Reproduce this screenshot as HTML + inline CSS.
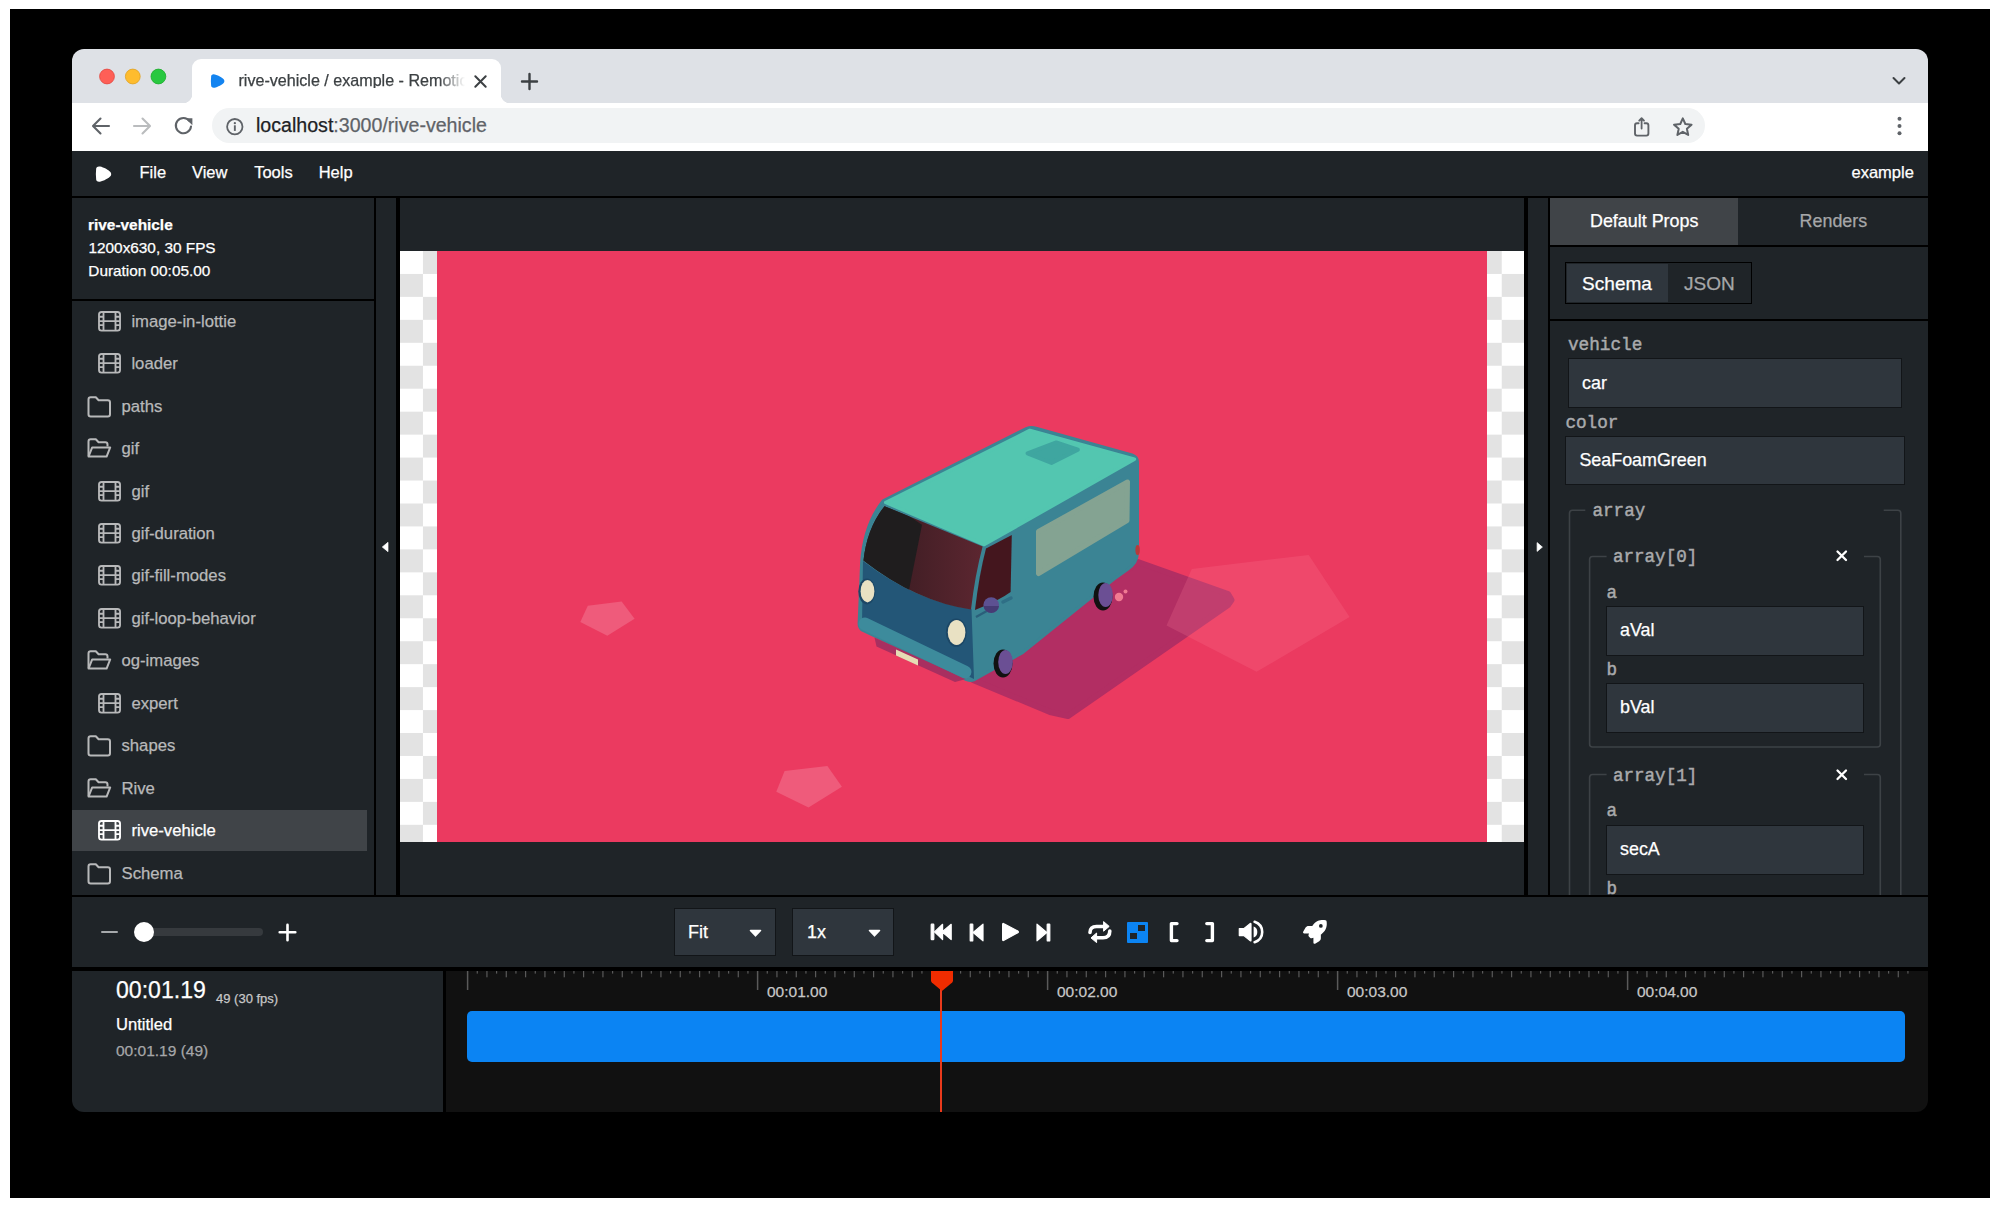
<!DOCTYPE html>
<html><head><meta charset="utf-8">
<style>
*{box-sizing:border-box;margin:0;padding:0}
html,body{width:2000px;height:1207px;overflow:hidden;background:#fff;font-family:"Liberation Sans",sans-serif}
.a{position:absolute}
.t{position:absolute;white-space:nowrap;line-height:1;-webkit-text-stroke:0.25px currentColor}
svg{overflow:visible}
</style></head><body>

<div class="a" style="left:10px;top:9px;width:1980px;height:1189px;background:#000;"></div>
<div class="a" style="left:0;top:0;width:2000px;height:1207px;clip-path:inset(49px 72px 95px 72px round 12px)">
<div class="a" style="left:72px;top:49px;width:1856px;height:54px;background:#dee1e6;"></div>
<svg class="a" style="left:0;top:0" width="2000" height="1207"><circle cx="107" cy="76.5" r="7.4" fill="#fe5f57" stroke="#e2463f" stroke-width="0.8"/><circle cx="132.8" cy="76.5" r="7.4" fill="#febc2e" stroke="#dea123" stroke-width="0.8"/><circle cx="158.4" cy="76.5" r="7.4" fill="#28c840" stroke="#1aab29" stroke-width="0.8"/></svg>
<div class="a" style="left:192px;top:59px;width:309px;height:44px;background:#fff;border-radius:9px 9px 0 0"></div>
<div class="a" style="left:183px;top:94px;width:9px;height:9px;background:radial-gradient(circle at 0 0,transparent 9px,#fff 9.5px);"></div>
<div class="a" style="left:501px;top:94px;width:9px;height:9px;background:radial-gradient(circle at 100% 0,transparent 9px,#fff 9.5px);"></div>
<svg class="a" style="left:211px;top:74px" width="14" height="14"><path transform="scale(0.88,0.87)" d="M0.1 3.6 C-0.1 1 1.8 0.1 4 0.5 C7.6 1.2 13 4.1 14.6 6.2 C15.4 7.3 15.4 8.9 14.6 10 C13 12.1 7.6 15 4 15.7 C1.8 16.1 -0.1 15.2 0.1 12.6 Q-0.4 8.1 0.1 3.6 Z" fill="#1484f0"/></svg>
<div class="t" style="left:238.50px;top:72.31px;font-size:16.1px;color:#3c4043;font-weight:normal;font-family:'Liberation Sans';width:228px;overflow:hidden;-webkit-mask-image:linear-gradient(90deg,#000 200px,transparent 226px)">rive-vehicle / example - Remotion</div>
<svg class="a" style="left:472px;top:73px" width="17" height="17" viewBox="0 0 17 17"><path d="M3.3 3.3 L13.7 13.7 M13.7 3.3 L3.3 13.7" stroke="#3c4043" stroke-width="2" stroke-linecap="round"/></svg>
<svg class="a" style="left:520px;top:72px" width="19" height="19" viewBox="0 0 19 19"><path d="M9.5 2 V17 M2 9.5 H17" stroke="#3c4043" stroke-width="2.4" stroke-linecap="round"/></svg>
<svg class="a" style="left:1890px;top:74px" width="18" height="14" viewBox="0 0 18 14"><path d="M3.5 4 L9 9.5 L14.5 4" stroke="#3c4043" stroke-width="2" fill="none" stroke-linecap="round" stroke-linejoin="round"/></svg>
<div class="a" style="left:72px;top:103px;width:1856px;height:48px;background:#fff;"></div>
<svg class="a" style="left:90px;top:116px" width="22" height="20" viewBox="0 0 22 20"><path d="M19 10 H3.5 M10.5 2.5 L3 10 L10.5 17.5" stroke="#5f6368" stroke-width="2.1" fill="none" stroke-linecap="round" stroke-linejoin="round"/></svg>
<svg class="a" style="left:131px;top:116px" width="22" height="20" viewBox="0 0 22 20"><path d="M3 10 H18.5 M11.5 2.5 L19 10 L11.5 17.5" stroke="#babcbe" stroke-width="2.1" fill="none" stroke-linecap="round" stroke-linejoin="round"/></svg>
<svg class="a" style="left:172px;top:115px" width="23" height="22" viewBox="0 0 23 22"><path d="M17.6 6.2 A7.6 7.6 0 1 0 19 11.5" stroke="#5f6368" stroke-width="2.1" fill="none" stroke-linecap="round"/><path d="M13.3 3.2 L20.4 3.2 L20.4 10.3 Z" fill="#5f6368"/></svg>
<div class="a" style="left:212px;top:108px;width:1493px;height:35px;background:#f1f3f4;border-radius:18px"></div>
<svg class="a" style="left:224px;top:116px" width="22" height="22" viewBox="0 0 22 22"><circle cx="10.8" cy="10.7" r="7.7" stroke="#5f6368" stroke-width="1.8" fill="none"/><rect x="9.9" y="9.3" width="1.9" height="5.6" fill="#5f6368"/><circle cx="10.85" cy="7.2" r="1.15" fill="#5f6368"/></svg>
<div class="t" style="left:256.00px;top:115.84px;font-size:19.6px;color:#202124;font-weight:normal;font-family:'Liberation Sans';">localhost<span style="color:#5f6368">:3000/rive-vehicle</span></div>
<svg class="a" style="left:1630px;top:112px" width="24" height="26" viewBox="0 0 24 26"><path d="M8.6 11.2 H7 Q5 11.2 5 13.2 V21.6 Q5 23.6 7 23.6 H16.4 Q18.4 23.6 18.4 21.6 V13.2 Q18.4 11.2 16.4 11.2 H14.6" stroke="#5f6368" stroke-width="1.9" fill="none" stroke-linecap="round"/><path d="M11.6 16.6 V6.4 M9.2 8.7 L11.6 6.2 L14 8.7" stroke="#5f6368" stroke-width="1.8" fill="none" stroke-linecap="round" stroke-linejoin="round"/></svg>
<svg class="a" style="left:1671px;top:112px" width="24" height="26" viewBox="0 0 24 26"><path d="M11.80 6.30 L14.33 12.02 L20.55 12.66 L15.89 16.83 L17.21 22.94 L11.80 19.80 L6.39 22.94 L7.71 16.83 L3.05 12.66 L9.27 12.02 Z" stroke="#5f6368" stroke-width="2" fill="none" stroke-linejoin="round"/></svg>
<svg class="a" style="left:1893px;top:115px" width="12" height="22" viewBox="0 0 12 22"><circle cx="6.5" cy="3.8" r="2" fill="#5f6368"/><circle cx="6.5" cy="11" r="2" fill="#5f6368"/><circle cx="6.5" cy="18.2" r="2" fill="#5f6368"/></svg>
<div class="a" style="left:72px;top:151px;width:1856px;height:45px;background:#1f2428;"></div>
<div class="a" style="left:72px;top:196px;width:1856px;height:2px;background:#000;"></div>
<svg class="a" style="left:96px;top:165.8px" width="16" height="17"><path d="M0.1 3.6 C-0.1 1 1.8 0.1 4 0.5 C7.6 1.2 13 4.1 14.6 6.2 C15.4 7.3 15.4 8.9 14.6 10 C13 12.1 7.6 15 4 15.7 C1.8 16.1 -0.1 15.2 0.1 12.6 Q-0.4 8.1 0.1 3.6 Z" fill="#fff"/></svg>
<div class="t" style="left:139.50px;top:164.47px;font-size:16.5px;color:#fff;font-weight:normal;font-family:'Liberation Sans';">File</div>
<div class="t" style="left:192.00px;top:164.47px;font-size:16.5px;color:#fff;font-weight:normal;font-family:'Liberation Sans';">View</div>
<div class="t" style="left:254.20px;top:164.47px;font-size:16.5px;color:#fff;font-weight:normal;font-family:'Liberation Sans';">Tools</div>
<div class="t" style="left:318.70px;top:164.47px;font-size:16.5px;color:#fff;font-weight:normal;font-family:'Liberation Sans';">Help</div>
<div class="t" style="left:1851.50px;top:164.47px;font-size:16.5px;color:#fff;font-weight:normal;font-family:'Liberation Sans';">example</div>
<div class="a" style="left:72px;top:198px;width:1856px;height:697px;background:#1f2428;"></div>
<div class="a" style="left:72px;top:299px;width:302px;height:2px;background:#000;"></div>
<div class="a" style="left:374px;top:198px;width:2px;height:697px;background:#000;"></div>
<div class="a" style="left:396px;top:198px;width:4px;height:697px;background:#000;"></div>
<div class="a" style="left:1524px;top:198px;width:4px;height:697px;background:#000;"></div>
<div class="a" style="left:1548px;top:198px;width:2px;height:697px;background:#000;"></div>
<svg class="a" style="left:381px;top:541px" width="9" height="12" viewBox="0 0 9 12"><path d="M7 1.3 L1.3 6 L7 10.7 Z" fill="#fff" stroke="#fff" stroke-width="0.7" stroke-linejoin="round"/></svg>
<svg class="a" style="left:1536px;top:541px" width="9" height="12" viewBox="0 0 9 12"><path d="M1.1 1.6 L6.4 6.1 L1.1 10.4 Z" fill="#fff" stroke="#fff" stroke-width="0.7" stroke-linejoin="round"/></svg>
<div class="t" style="left:88.00px;top:216.71px;font-size:15.4px;color:#fff;font-weight:bold;font-family:'Liberation Sans';">rive-vehicle</div>
<div class="t" style="left:88.50px;top:239.95px;font-size:15.35px;color:#fff;font-weight:normal;font-family:'Liberation Sans';">1200x630, 30 FPS</div>
<div class="t" style="left:88.30px;top:263.25px;font-size:15.35px;color:#fff;font-weight:normal;font-family:'Liberation Sans';">Duration 00:05.00</div>
<svg class="a" style="left:98px;top:311px" width="23" height="21" viewBox="0 0 23 21"><g fill="none" stroke="#b8b9ba" stroke-width="1.85"><rect x="1.0" y="0.95" width="21.05" height="18.7" rx="2.6"/><path d="M5.5 1 V19.6 M17.5 1 V19.6 M1 10.1 H22 M1 5.75 H5.5 M1 14.1 H5.5 M17.5 5.75 H22 M17.5 14.1 H22"/></g></svg>
<div class="t" style="left:131.40px;top:313.61px;font-size:16.7px;color:#b8b9ba;font-weight:normal;font-family:'Liberation Sans';">image-in-lottie</div>
<svg class="a" style="left:98px;top:353px" width="23" height="21" viewBox="0 0 23 21"><g fill="none" stroke="#b8b9ba" stroke-width="1.85"><rect x="1.0" y="0.95" width="21.05" height="18.7" rx="2.6"/><path d="M5.5 1 V19.6 M17.5 1 V19.6 M1 10.1 H22 M1 5.75 H5.5 M1 14.1 H5.5 M17.5 5.75 H22 M17.5 14.1 H22"/></g></svg>
<div class="t" style="left:131.40px;top:356.09px;font-size:16.7px;color:#b8b9ba;font-weight:normal;font-family:'Liberation Sans';">loader</div>
<svg class="a" style="left:87px;top:396px" width="25" height="22" viewBox="0 0 25 22"><path d="M1.5 3.5 Q1.5 1.3 3.7 1.3 H8.8 L11.6 4.3 H20.8 Q23 4.3 23 6.5 V18.3 Q23 20.5 20.8 20.5 H3.7 Q1.5 20.5 1.5 18.3 Z" fill="none" stroke="#b8b9ba" stroke-width="2" stroke-linejoin="round"/></svg>
<div class="t" style="left:121.50px;top:398.56px;font-size:16.7px;color:#b8b9ba;font-weight:normal;font-family:'Liberation Sans';">paths</div>
<svg class="a" style="left:87px;top:438px" width="25" height="22" viewBox="0 0 25 22"><g fill="none" stroke="#b8b9ba" stroke-width="2" stroke-linejoin="round"><path d="M1.5 18 V3.5 Q1.5 1.3 3.7 1.3 H8.8 L11.6 4.3 H18.3 Q20.5 4.3 20.5 6.5 V8.6"/><path d="M1.5 18.6 L5.2 9.4 H23.2 L19.6 18.6 Z"/></g></svg>
<div class="t" style="left:121.50px;top:441.05px;font-size:16.7px;color:#b8b9ba;font-weight:normal;font-family:'Liberation Sans';">gif</div>
<svg class="a" style="left:98px;top:481px" width="23" height="21" viewBox="0 0 23 21"><g fill="none" stroke="#b8b9ba" stroke-width="1.85"><rect x="1.0" y="0.95" width="21.05" height="18.7" rx="2.6"/><path d="M5.5 1 V19.6 M17.5 1 V19.6 M1 10.1 H22 M1 5.75 H5.5 M1 14.1 H5.5 M17.5 5.75 H22 M17.5 14.1 H22"/></g></svg>
<div class="t" style="left:131.40px;top:483.53px;font-size:16.7px;color:#b8b9ba;font-weight:normal;font-family:'Liberation Sans';">gif</div>
<svg class="a" style="left:98px;top:523px" width="23" height="21" viewBox="0 0 23 21"><g fill="none" stroke="#b8b9ba" stroke-width="1.85"><rect x="1.0" y="0.95" width="21.05" height="18.7" rx="2.6"/><path d="M5.5 1 V19.6 M17.5 1 V19.6 M1 10.1 H22 M1 5.75 H5.5 M1 14.1 H5.5 M17.5 5.75 H22 M17.5 14.1 H22"/></g></svg>
<div class="t" style="left:131.40px;top:526.00px;font-size:16.7px;color:#b8b9ba;font-weight:normal;font-family:'Liberation Sans';">gif-duration</div>
<svg class="a" style="left:98px;top:565px" width="23" height="21" viewBox="0 0 23 21"><g fill="none" stroke="#b8b9ba" stroke-width="1.85"><rect x="1.0" y="0.95" width="21.05" height="18.7" rx="2.6"/><path d="M5.5 1 V19.6 M17.5 1 V19.6 M1 10.1 H22 M1 5.75 H5.5 M1 14.1 H5.5 M17.5 5.75 H22 M17.5 14.1 H22"/></g></svg>
<div class="t" style="left:131.40px;top:568.49px;font-size:16.7px;color:#b8b9ba;font-weight:normal;font-family:'Liberation Sans';">gif-fill-modes</div>
<svg class="a" style="left:98px;top:608px" width="23" height="21" viewBox="0 0 23 21"><g fill="none" stroke="#b8b9ba" stroke-width="1.85"><rect x="1.0" y="0.95" width="21.05" height="18.7" rx="2.6"/><path d="M5.5 1 V19.6 M17.5 1 V19.6 M1 10.1 H22 M1 5.75 H5.5 M1 14.1 H5.5 M17.5 5.75 H22 M17.5 14.1 H22"/></g></svg>
<div class="t" style="left:131.40px;top:610.96px;font-size:16.7px;color:#b8b9ba;font-weight:normal;font-family:'Liberation Sans';">gif-loop-behavior</div>
<svg class="a" style="left:87px;top:650px" width="25" height="22" viewBox="0 0 25 22"><g fill="none" stroke="#b8b9ba" stroke-width="2" stroke-linejoin="round"><path d="M1.5 18 V3.5 Q1.5 1.3 3.7 1.3 H8.8 L11.6 4.3 H18.3 Q20.5 4.3 20.5 6.5 V8.6"/><path d="M1.5 18.6 L5.2 9.4 H23.2 L19.6 18.6 Z"/></g></svg>
<div class="t" style="left:121.50px;top:653.44px;font-size:16.7px;color:#b8b9ba;font-weight:normal;font-family:'Liberation Sans';">og-images</div>
<svg class="a" style="left:98px;top:693px" width="23" height="21" viewBox="0 0 23 21"><g fill="none" stroke="#b8b9ba" stroke-width="1.85"><rect x="1.0" y="0.95" width="21.05" height="18.7" rx="2.6"/><path d="M5.5 1 V19.6 M17.5 1 V19.6 M1 10.1 H22 M1 5.75 H5.5 M1 14.1 H5.5 M17.5 5.75 H22 M17.5 14.1 H22"/></g></svg>
<div class="t" style="left:131.40px;top:695.92px;font-size:16.7px;color:#b8b9ba;font-weight:normal;font-family:'Liberation Sans';">expert</div>
<svg class="a" style="left:87px;top:735px" width="25" height="22" viewBox="0 0 25 22"><path d="M1.5 3.5 Q1.5 1.3 3.7 1.3 H8.8 L11.6 4.3 H20.8 Q23 4.3 23 6.5 V18.3 Q23 20.5 20.8 20.5 H3.7 Q1.5 20.5 1.5 18.3 Z" fill="none" stroke="#b8b9ba" stroke-width="2" stroke-linejoin="round"/></svg>
<div class="t" style="left:121.50px;top:738.40px;font-size:16.7px;color:#b8b9ba;font-weight:normal;font-family:'Liberation Sans';">shapes</div>
<svg class="a" style="left:87px;top:778px" width="25" height="22" viewBox="0 0 25 22"><g fill="none" stroke="#b8b9ba" stroke-width="2" stroke-linejoin="round"><path d="M1.5 18 V3.5 Q1.5 1.3 3.7 1.3 H8.8 L11.6 4.3 H18.3 Q20.5 4.3 20.5 6.5 V8.6"/><path d="M1.5 18.6 L5.2 9.4 H23.2 L19.6 18.6 Z"/></g></svg>
<div class="t" style="left:121.50px;top:780.88px;font-size:16.7px;color:#b8b9ba;font-weight:normal;font-family:'Liberation Sans';">Rive</div>
<div class="a" style="left:72px;top:810px;width:295px;height:41px;background:rgba(255,255,255,0.15);"></div>
<svg class="a" style="left:98px;top:820px" width="23" height="21" viewBox="0 0 23 21"><g fill="none" stroke="#fff" stroke-width="1.85"><rect x="1.0" y="0.95" width="21.05" height="18.7" rx="2.6"/><path d="M5.5 1 V19.6 M17.5 1 V19.6 M1 10.1 H22 M1 5.75 H5.5 M1 14.1 H5.5 M17.5 5.75 H22 M17.5 14.1 H22"/></g></svg>
<div class="t" style="left:131.40px;top:823.36px;font-size:16.7px;color:#fff;font-weight:normal;font-family:'Liberation Sans';">rive-vehicle</div>
<svg class="a" style="left:87px;top:863px" width="25" height="22" viewBox="0 0 25 22"><path d="M1.5 3.5 Q1.5 1.3 3.7 1.3 H8.8 L11.6 4.3 H20.8 Q23 4.3 23 6.5 V18.3 Q23 20.5 20.8 20.5 H3.7 Q1.5 20.5 1.5 18.3 Z" fill="none" stroke="#b8b9ba" stroke-width="2" stroke-linejoin="round"/></svg>
<div class="t" style="left:121.50px;top:865.84px;font-size:16.7px;color:#b8b9ba;font-weight:normal;font-family:'Liberation Sans';">Schema</div>
<div class="a" style="left:400px;top:251px;width:1124px;height:591px;background:repeating-conic-gradient(#fff 0 25%,#e3e3e3 0 50%) 22.96px 0/45.92px 45.92px;"></div>
<div class="a" style="left:437px;top:251px;width:1050px;height:591px;background:#eb3a60;"></div>
<svg class="a" style="left:0;top:0;clip-path:inset(251px 513px 365px 437px)" width="2000" height="1207"><polygon points="587.8,605.8 621.6,601.5 634.6,618.8 607.3,635.7 580.3,622.1" fill="#ef5b7b" /><polygon points="784.6,770.9 827.4,765.9 841.9,786.8 808.5,807.6 776.3,791.7" fill="#ef5b7b" /><polygon points="1138,562 1228,594 1231.5,600 1228,605 1068,716 1050,712 973,680 1022,652 1116,578" fill="#b22e63" stroke="#b22e63" stroke-width="6" stroke-linejoin="round"/><polygon points="1191.8,569 1308.7,554.9 1349.6,616.9 1256.6,671.8 1166.5,625.4" fill="rgba(255,130,155,0.2)" /><path d="M883.1 500.9 L1026.3 428.6 Q1031 426.8 1036 428.3 L1132 455 Q1137.5 457 1137.5 462 L1137.5 553 Q1137 563 1128 569 L1114 579 L1022.6 652.7 L974.6 679.5 Q970 681.5 966 679.5 L862 630 Q858.5 627 859.2 621.5 L861.6 563 Q864 525 883.1 500.9 Z" fill="#3b8494" stroke="#3b8494" stroke-width="3" stroke-linejoin="round"/><path d="M863 561 Q916.3 601.7 971.5 609 L974 679 L862 624 Z" fill="#235677"/><polygon points="885.7,502.5 1029.9,430.4 1134.4,459.3 984.2,544.6" fill="#53c6b0" stroke="#53c6b0" stroke-width="3.5" stroke-linejoin="round"/><polygon points="1027.5,453.3 1056.3,442.4 1077.9,449.7 1051.5,462.9" fill="#3fa6a0" stroke="#3fa6a0" stroke-width="4" stroke-linejoin="round"/><defs><linearGradient id="ws" x1="0" y1="0" x2="1" y2="0"><stop offset="0" stop-color="#331a1f"/><stop offset="1" stop-color="#5c2630"/></linearGradient></defs><defs><clipPath id="wsc"><path d="M884.5 506.2 L982.6 546.5 Q975 575 971 609.5 Q916.3 601.7 863.5 560.5 Q867 528 884.5 506.2 Z"/></clipPath></defs><path d="M884.5 506.2 L982.6 546.5 Q975 575 971 609.5 Q916.3 601.7 863.5 560.5 Q867 528 884.5 506.2 Z" fill="url(#ws)"/><path clip-path="url(#wsc)" d="M870 490 L922 524.7 L905 610 L850 590 Z" fill="#1f1d1e"/><path d="M986 548.5 L1011.8 535 L1010.6 592 Q1000 600 975 610 Q979 575 986 548.5 Z" fill="#44161e"/><polygon points="1038.5,531.5 1127.5,482 1127,520.5 1038.5,573.5" fill="#84a392" stroke="#84a392" stroke-width="5" stroke-linejoin="round"/><ellipse cx="1137.6" cy="550" rx="2.2" ry="5" fill="#b83a3a"/><path d="M874.5 637.5 L966 679 L955 682 L876.5 646.5 Z" fill="#a82f60"/><path d="M865 624 L965 672" stroke="#3d8b9c" stroke-width="13" stroke-linecap="round"/><polygon points="896,649.5 918,659.5 918,665.5 896,655.5" fill="#e6dcb4" /><ellipse cx="866.9" cy="591.4" rx="8.6" ry="13" fill="#1c4766"/><ellipse cx="867.5" cy="591.2" rx="6.9" ry="11.2" fill="#e9e1c3"/><ellipse cx="956.3" cy="632.6" rx="10.4" ry="14.2" fill="#1c4766"/><ellipse cx="956.6" cy="632.4" rx="8.8" ry="12.5" fill="#e9e1c3"/><ellipse cx="1003" cy="663.5" rx="9.5" ry="14" fill="#111"/><ellipse cx="1005.5" cy="662" rx="7.3" ry="12" fill="#6b4f94"/><ellipse cx="1103" cy="596.5" rx="9.5" ry="14" fill="#111"/><ellipse cx="1105.6" cy="595" rx="7.3" ry="12" fill="#6b4f94"/><path d="M976 617 L994 607" stroke="#2a5f7a" stroke-width="2.2"/><circle cx="991.2" cy="605" r="7.8" fill="#5d5192"/><path d="M983.5 606 A7.8 7.8 0 0 0 999 606 Z" fill="#463b74"/><path d="M1003 602 L1011 598" stroke="#2f6f86" stroke-width="3.5" stroke-linecap="round"/><circle cx="1119" cy="597" r="4.2" fill="#f07a92"/><circle cx="1125.5" cy="591.5" r="2" fill="#f07a92"/></svg>
<div class="a" style="left:1550px;top:198px;width:188px;height:47px;background:rgba(255,255,255,0.15);"></div>
<div class="a" style="left:1550px;top:245px;width:378px;height:2px;background:#000;"></div>
<div class="t" style="left:1590.00px;top:213.09px;font-size:17.9px;color:#fff;font-weight:normal;font-family:'Liberation Sans';">Default Props</div>
<div class="t" style="left:1799.60px;top:213.09px;font-size:17.9px;color:#a6a7a9;font-weight:normal;font-family:'Liberation Sans';">Renders</div>
<div class="a" style="left:1565px;top:262px;width:187px;height:41.5px;background:#1f2428;border:1.5px solid #000"></div>
<div class="a" style="left:1566.5px;top:263.5px;width:101.7px;height:38.5px;background:#2f363d;"></div>
<div class="t" style="left:1582.10px;top:273.71px;font-size:19.05px;color:#fff;font-weight:normal;font-family:'Liberation Sans';">Schema</div>
<div class="t" style="left:1684.00px;top:273.71px;font-size:19.05px;color:#a6a7a9;font-weight:normal;font-family:'Liberation Sans';">JSON</div>
<div class="a" style="left:1550px;top:319px;width:378px;height:2px;background:#000;"></div>
<div class="t" style="left:1568.00px;top:337.05px;font-size:17.7px;color:#a9aaac;font-weight:normal;font-family:'Liberation Mono';-webkit-text-stroke:0.45px #a9aaac">vehicle</div>
<div class="a" style="left:1567.7px;top:358.3px;width:334.4px;height:49.4px;background:#2f363d;border:1.7px solid rgba(0,0,0,0.6)"></div>
<div class="t" style="left:1582.00px;top:375.49px;font-size:17.9px;color:#fff;font-weight:normal;font-family:'Liberation Sans';">car</div>
<div class="t" style="left:1565.40px;top:414.55px;font-size:17.7px;color:#a9aaac;font-weight:normal;font-family:'Liberation Mono';-webkit-text-stroke:0.45px #a9aaac">color</div>
<div class="a" style="left:1565.3px;top:435.5px;width:339.4px;height:49.6px;background:#2f363d;border:1.7px solid rgba(0,0,0,0.6)"></div>
<div class="t" style="left:1579.40px;top:451.99px;font-size:17.9px;color:#fff;font-weight:normal;font-family:'Liberation Sans';">SeaFoamGreen</div>
<svg class="a" style="left:0;top:0" width="2000" height="1207"><path d="M1585.3 510.3 H1572.5 Q1569.5 510.3 1569.5 513.3 V997 Q1569.5 1000 1572.5 1000 H1897.8 Q1900.8 1000 1900.8 997 V513.3 Q1900.8 510.3 1897.8 510.3 H1883.7" fill="none" stroke="#3d4246" stroke-width="1.6"/></svg>
<div class="t" style="left:1592.50px;top:502.62px;font-size:17.6px;color:#a9aaac;font-weight:normal;font-family:'Liberation Mono';-webkit-text-stroke:0.45px #a9aaac">array</div>
<svg class="a" style="left:0;top:0" width="2000" height="1207"><path d="M1606.6 556.5 H1592.6 Q1589.6 556.5 1589.6 559.5 V744 Q1589.6 747 1592.6 747 H1877.3 Q1880.3 747 1880.3 744 V559.5 Q1880.3 556.5 1877.3 556.5 H1864" fill="none" stroke="#3d4246" stroke-width="1.6"/></svg>
<div class="t" style="left:1612.90px;top:548.62px;font-size:17.6px;color:#a9aaac;font-weight:normal;font-family:'Liberation Mono';-webkit-text-stroke:0.45px #a9aaac">array[0]</div>
<svg class="a" style="left:1836px;top:550px" width="12" height="12" viewBox="0 0 12 12"><path d="M1.5 1.5 L10 10 M10 1.5 L1.5 10" stroke="#fff" stroke-width="2.3" stroke-linecap="round"/></svg>
<div class="t" style="left:1606.60px;top:584.62px;font-size:17.6px;color:#a9aaac;font-weight:normal;font-family:'Liberation Mono';-webkit-text-stroke:0.45px #a9aaac">a</div>
<div class="a" style="left:1606.3px;top:605.6999999999999px;width:257.4px;height:50.0px;background:#2f363d;border:1.7px solid rgba(0,0,0,0.6)"></div>
<div class="t" style="left:1620.00px;top:622.18px;font-size:17.9px;color:#fff;font-weight:normal;font-family:'Liberation Sans';">aVal</div>
<div class="t" style="left:1606.60px;top:662.22px;font-size:17.6px;color:#a9aaac;font-weight:normal;font-family:'Liberation Mono';-webkit-text-stroke:0.45px #a9aaac">b</div>
<div class="a" style="left:1606.3px;top:682.6999999999999px;width:257.4px;height:49.9px;background:#2f363d;border:1.7px solid rgba(0,0,0,0.6)"></div>
<div class="t" style="left:1620.00px;top:699.18px;font-size:17.9px;color:#fff;font-weight:normal;font-family:'Liberation Sans';">bVal</div>
<svg class="a" style="left:0;top:0" width="2000" height="1207"><path d="M1606.6 774.5 H1592.6 Q1589.6 774.5 1589.6 777.5 V997 Q1589.6 1000 1592.6 1000 H1877.3 Q1880.3 1000 1880.3 997 V777.5 Q1880.3 774.5 1877.3 774.5 H1864" fill="none" stroke="#3d4246" stroke-width="1.6"/></svg>
<div class="t" style="left:1612.90px;top:767.62px;font-size:17.6px;color:#a9aaac;font-weight:normal;font-family:'Liberation Mono';-webkit-text-stroke:0.45px #a9aaac">array[1]</div>
<svg class="a" style="left:1836px;top:768.5px" width="12" height="12" viewBox="0 0 12 12"><path d="M1.5 1.5 L10 10 M10 1.5 L1.5 10" stroke="#fff" stroke-width="2.3" stroke-linecap="round"/></svg>
<div class="t" style="left:1606.60px;top:803.42px;font-size:17.6px;color:#a9aaac;font-weight:normal;font-family:'Liberation Mono';-webkit-text-stroke:0.45px #a9aaac">a</div>
<div class="a" style="left:1606.3px;top:824.9px;width:257.4px;height:49.8px;background:#2f363d;border:1.7px solid rgba(0,0,0,0.6)"></div>
<div class="t" style="left:1620.00px;top:840.88px;font-size:17.9px;color:#fff;font-weight:normal;font-family:'Liberation Sans';">secA</div>
<div class="t" style="left:1606.60px;top:880.82px;font-size:17.6px;color:#a9aaac;font-weight:normal;font-family:'Liberation Mono';-webkit-text-stroke:0.45px #a9aaac">b</div>
<div class="a" style="left:72px;top:895px;width:1856px;height:2px;background:#000;"></div>
<div class="a" style="left:72px;top:897px;width:1856px;height:70px;background:#1f2428;"></div>
<div class="a" style="left:72px;top:967px;width:1856px;height:4px;background:#000;"></div>
<div class="a" style="left:101px;top:930.7px;width:17px;height:2.6px;background:#a6a9ac;border-radius:1.3px"></div>
<div class="a" style="left:144px;top:928.2px;width:118.5px;height:7.6px;background:#363a3e;border-radius:4px"></div>
<div class="a" style="left:134px;top:922px;width:20px;height:20px;background:#fff;border-radius:50%"></div>
<svg class="a" style="left:278px;top:923px" width="19" height="19" viewBox="0 0 19 19"><path d="M9.5 1.9 V17.3 M1.7 9.2 H17.3" stroke="#fff" stroke-width="2.6" stroke-linecap="round"/></svg>
<div class="a" style="left:674px;top:907.6px;width:101.6px;height:48.4px;background:#2f363d;border:1.6px solid rgba(0,0,0,0.6)"></div>
<div class="t" style="left:688.00px;top:922.70px;font-size:18px;color:#fff;font-weight:normal;font-family:'Liberation Sans';">Fit</div>
<svg class="a" style="left:749.4px;top:929px" width="13" height="8" viewBox="0 0 13 8"><path d="M1.5 1.5 H11.5 L6.5 6.8 Z" fill="#fff" stroke="#fff" stroke-width="1.6" stroke-linejoin="round"/></svg>
<div class="a" style="left:792.4px;top:907.6px;width:102px;height:48.4px;background:#2f363d;border:1.6px solid rgba(0,0,0,0.6)"></div>
<div class="t" style="left:807.00px;top:922.70px;font-size:18px;color:#fff;font-weight:normal;font-family:'Liberation Sans';">1x</div>
<svg class="a" style="left:868px;top:929px" width="13" height="8" viewBox="0 0 13 8"><path d="M1.5 1.5 H11.5 L6.5 6.8 Z" fill="#fff" stroke="#fff" stroke-width="1.6" stroke-linejoin="round"/></svg>
<svg class="a" style="left:930px;top:923px" width="23" height="18" viewBox="0 0 23 18"><g fill="#fff" stroke="#fff" stroke-linejoin="round" stroke-width="1.2"><rect x="1.2" y="1.2" width="2.6" height="15.5" rx="0.6"/><path d="M4.5 8.9 L12.6 1.3 V16.6 Z M12 8.9 L21.2 1.3 V16.6 Z"/></g></svg>
<svg class="a" style="left:968.5px;top:922.5px" width="16" height="19" viewBox="0 0 16 19"><g fill="#fff" stroke="#fff" stroke-linejoin="round" stroke-width="1.2"><rect x="1.2" y="1" width="2.6" height="17" rx="0.6"/><path d="M4.2 9.5 L14 1.2 V17.8 Z"/></g></svg>
<svg class="a" style="left:1000.5px;top:922px" width="19" height="20" viewBox="0 0 19 20"><path d="M1.6 2.4 Q1.6 0.9 3 1.7 L16.8 9 Q18 9.9 16.8 10.8 L3 18.3 Q1.6 19.1 1.6 17.6 Z" fill="#fff" stroke="#fff" stroke-width="1.2" stroke-linejoin="round"/></svg>
<svg class="a" style="left:1035.5px;top:922.5px" width="16" height="19" viewBox="0 0 16 19"><g fill="#fff" stroke="#fff" stroke-linejoin="round" stroke-width="1.2"><rect x="11.2" y="1" width="2.6" height="17" rx="0.6"/><path d="M10.8 9.5 L1 1.2 V17.8 Z"/></g></svg>
<svg class="a" style="left:1088px;top:921px" width="24" height="22" viewBox="0 0 24 22"><g stroke="#fff" stroke-width="3.6" fill="none" stroke-linecap="round"><path d="M2 11.5 Q2 5.5 8.5 5.5 H16.5"/><path d="M21.8 10 Q21.8 16.8 15 16.8 H8"/></g><path d="M15.6 0.6 L21.2 5.4 L15.6 10.2 Z M8.6 12 L3 16.9 L8.6 21.6 Z" fill="#fff" stroke="#fff" stroke-width="1" stroke-linejoin="round"/></svg>
<div class="a" style="left:1127px;top:922px;width:21px;height:20.6px;background:#0b84f3;border-radius:1px"></div>
<div class="a" style="left:1137.7px;top:924.6px;width:7px;height:6.8px;background:#1f2428;"></div>
<div class="a" style="left:1129.8px;top:932.5px;width:7px;height:6.8px;background:#1f2428;"></div>
<svg class="a" style="left:1167.5px;top:921px" width="12" height="23" viewBox="0 0 12 23"><path d="M9 2.6 H3.4 V19.6 H9" stroke="#fff" stroke-width="3.4" fill="none" stroke-linecap="round" stroke-linejoin="round"/></svg>
<svg class="a" style="left:1203.5px;top:921px" width="12" height="23" viewBox="0 0 12 23"><path d="M2.8 2.6 H8.4 V19.6 H2.8" stroke="#fff" stroke-width="3.4" fill="none" stroke-linecap="round" stroke-linejoin="round"/></svg>
<svg class="a" style="left:1238px;top:920px" width="28" height="25" viewBox="0 0 28 25"><path d="M1.3 8.6 H5.8 L12.3 3.5 Q13 3 13 4 V20.3 Q13 21.3 12.3 20.8 L5.8 15.6 H1.3 Z" fill="#fff" stroke="#fff" stroke-width="1.2" stroke-linejoin="round"/><path d="M15.6 6.5 Q19.3 7.6 19.3 12 Q19.3 16.4 15.6 17.5 Z" fill="#fff"/><path d="M16.6 1.8 Q24.2 4.4 24.2 12 Q24.2 19.6 16.6 22.2" stroke="#fff" stroke-width="2.6" fill="none" stroke-linecap="round"/></svg>
<svg class="a" style="left:1303.4px;top:919.9px" width="24" height="24"><path transform="scale(0.0465)" d="M156.6 384.9L125.7 354c-8.5-8.5-11.5-20.8-7.7-32.2c3-8.9 7-20.5 11.8-33.8L24 288c-8.6 0-16.6-4.6-20.9-12.1s-4.2-16.7 .2-24.1l52.5-88.5c13-21.9 36.5-35.3 61.9-35.3l82.3 0c2.4-4 4.8-7.7 7.2-11.3C289.1-4.1 411.1-8.1 483.9 5.3c11.6 2.1 20.6 11.2 22.8 22.8c13.4 72.9 9.3 194.8-111.4 276.7c-3.5 2.4-7.3 4.8-11.3 7.2v82.3c0 25.4-13.4 49-35.3 61.9l-88.5 52.5c-7.4 4.4-16.6 4.5-24.1 .2s-12.1-12.2-12.1-20.9V380.8c-14.1 4.9-26.4 8.9-35.7 11.9c-11.2 3.6-23.4 .5-31.8-7.8zM384 168a40 40 0 1 0 0-80 40 40 0 1 0 0 80z" fill="#fff"/></svg>
<div class="a" style="left:72px;top:971px;width:371px;height:141px;background:#1f2428;"></div>
<div class="a" style="left:443px;top:971px;width:3px;height:141px;background:#000;"></div>
<div class="a" style="left:446px;top:971px;width:1482px;height:141px;background:#111;"></div>
<div class="t" style="left:116.00px;top:979.37px;font-size:23.1px;color:#fff;font-weight:normal;font-family:'Liberation Sans';">00:01.19</div>
<div class="t" style="left:216.00px;top:991.95px;font-size:13px;color:#c8c8c8;font-weight:normal;font-family:'Liberation Sans';">49 (30 fps)</div>
<div class="t" style="left:116.00px;top:1017.09px;font-size:16.6px;color:#fff;font-weight:normal;font-family:'Liberation Sans';">Untitled</div>
<div class="t" style="left:116.00px;top:1042.83px;font-size:15.5px;color:#a6a7a9;font-weight:normal;font-family:'Liberation Sans';">00:01.19 (49)</div>
<svg class="a" style="left:0;top:0" width="2000" height="1207"><rect x="466.85" y="971" width="1.5" height="19" fill="#5a5a5a"/><rect x="476.67" y="971" width="1.2" height="2.6" fill="#5a5a5a"/><rect x="486.33" y="971" width="1.2" height="6.3" fill="#5a5a5a"/><rect x="496.00" y="971" width="1.2" height="2.6" fill="#5a5a5a"/><rect x="505.67" y="971" width="1.2" height="6.3" fill="#5a5a5a"/><rect x="515.33" y="971" width="1.2" height="2.6" fill="#5a5a5a"/><rect x="525.00" y="971" width="1.2" height="6.3" fill="#5a5a5a"/><rect x="534.67" y="971" width="1.2" height="2.6" fill="#5a5a5a"/><rect x="544.33" y="971" width="1.2" height="6.3" fill="#5a5a5a"/><rect x="554.00" y="971" width="1.2" height="2.6" fill="#5a5a5a"/><rect x="563.67" y="971" width="1.2" height="6.3" fill="#5a5a5a"/><rect x="573.33" y="971" width="1.2" height="2.6" fill="#5a5a5a"/><rect x="583.00" y="971" width="1.2" height="6.3" fill="#5a5a5a"/><rect x="592.67" y="971" width="1.2" height="2.6" fill="#5a5a5a"/><rect x="602.33" y="971" width="1.2" height="6.3" fill="#5a5a5a"/><rect x="612.00" y="971" width="1.2" height="2.6" fill="#5a5a5a"/><rect x="621.67" y="971" width="1.2" height="6.3" fill="#5a5a5a"/><rect x="631.33" y="971" width="1.2" height="2.6" fill="#5a5a5a"/><rect x="641.00" y="971" width="1.2" height="6.3" fill="#5a5a5a"/><rect x="650.67" y="971" width="1.2" height="2.6" fill="#5a5a5a"/><rect x="660.33" y="971" width="1.2" height="6.3" fill="#5a5a5a"/><rect x="670.00" y="971" width="1.2" height="2.6" fill="#5a5a5a"/><rect x="679.67" y="971" width="1.2" height="6.3" fill="#5a5a5a"/><rect x="689.33" y="971" width="1.2" height="2.6" fill="#5a5a5a"/><rect x="699.00" y="971" width="1.2" height="6.3" fill="#5a5a5a"/><rect x="708.67" y="971" width="1.2" height="2.6" fill="#5a5a5a"/><rect x="718.33" y="971" width="1.2" height="6.3" fill="#5a5a5a"/><rect x="728.00" y="971" width="1.2" height="2.6" fill="#5a5a5a"/><rect x="737.67" y="971" width="1.2" height="6.3" fill="#5a5a5a"/><rect x="747.33" y="971" width="1.2" height="2.6" fill="#5a5a5a"/><rect x="756.85" y="971" width="1.5" height="19" fill="#5a5a5a"/><rect x="766.67" y="971" width="1.2" height="2.6" fill="#5a5a5a"/><rect x="776.33" y="971" width="1.2" height="6.3" fill="#5a5a5a"/><rect x="786.00" y="971" width="1.2" height="2.6" fill="#5a5a5a"/><rect x="795.67" y="971" width="1.2" height="6.3" fill="#5a5a5a"/><rect x="805.33" y="971" width="1.2" height="2.6" fill="#5a5a5a"/><rect x="815.00" y="971" width="1.2" height="6.3" fill="#5a5a5a"/><rect x="824.67" y="971" width="1.2" height="2.6" fill="#5a5a5a"/><rect x="834.33" y="971" width="1.2" height="6.3" fill="#5a5a5a"/><rect x="844.00" y="971" width="1.2" height="2.6" fill="#5a5a5a"/><rect x="853.67" y="971" width="1.2" height="6.3" fill="#5a5a5a"/><rect x="863.33" y="971" width="1.2" height="2.6" fill="#5a5a5a"/><rect x="873.00" y="971" width="1.2" height="6.3" fill="#5a5a5a"/><rect x="882.67" y="971" width="1.2" height="2.6" fill="#5a5a5a"/><rect x="892.33" y="971" width="1.2" height="6.3" fill="#5a5a5a"/><rect x="902.00" y="971" width="1.2" height="2.6" fill="#5a5a5a"/><rect x="911.67" y="971" width="1.2" height="6.3" fill="#5a5a5a"/><rect x="921.33" y="971" width="1.2" height="2.6" fill="#5a5a5a"/><rect x="931.00" y="971" width="1.2" height="6.3" fill="#5a5a5a"/><rect x="940.67" y="971" width="1.2" height="2.6" fill="#5a5a5a"/><rect x="950.33" y="971" width="1.2" height="6.3" fill="#5a5a5a"/><rect x="960.00" y="971" width="1.2" height="2.6" fill="#5a5a5a"/><rect x="969.67" y="971" width="1.2" height="6.3" fill="#5a5a5a"/><rect x="979.33" y="971" width="1.2" height="2.6" fill="#5a5a5a"/><rect x="989.00" y="971" width="1.2" height="6.3" fill="#5a5a5a"/><rect x="998.67" y="971" width="1.2" height="2.6" fill="#5a5a5a"/><rect x="1008.33" y="971" width="1.2" height="6.3" fill="#5a5a5a"/><rect x="1018.00" y="971" width="1.2" height="2.6" fill="#5a5a5a"/><rect x="1027.67" y="971" width="1.2" height="6.3" fill="#5a5a5a"/><rect x="1037.33" y="971" width="1.2" height="2.6" fill="#5a5a5a"/><rect x="1046.85" y="971" width="1.5" height="19" fill="#5a5a5a"/><rect x="1056.67" y="971" width="1.2" height="2.6" fill="#5a5a5a"/><rect x="1066.33" y="971" width="1.2" height="6.3" fill="#5a5a5a"/><rect x="1076.00" y="971" width="1.2" height="2.6" fill="#5a5a5a"/><rect x="1085.67" y="971" width="1.2" height="6.3" fill="#5a5a5a"/><rect x="1095.33" y="971" width="1.2" height="2.6" fill="#5a5a5a"/><rect x="1105.00" y="971" width="1.2" height="6.3" fill="#5a5a5a"/><rect x="1114.67" y="971" width="1.2" height="2.6" fill="#5a5a5a"/><rect x="1124.33" y="971" width="1.2" height="6.3" fill="#5a5a5a"/><rect x="1134.00" y="971" width="1.2" height="2.6" fill="#5a5a5a"/><rect x="1143.67" y="971" width="1.2" height="6.3" fill="#5a5a5a"/><rect x="1153.33" y="971" width="1.2" height="2.6" fill="#5a5a5a"/><rect x="1163.00" y="971" width="1.2" height="6.3" fill="#5a5a5a"/><rect x="1172.67" y="971" width="1.2" height="2.6" fill="#5a5a5a"/><rect x="1182.33" y="971" width="1.2" height="6.3" fill="#5a5a5a"/><rect x="1192.00" y="971" width="1.2" height="2.6" fill="#5a5a5a"/><rect x="1201.67" y="971" width="1.2" height="6.3" fill="#5a5a5a"/><rect x="1211.33" y="971" width="1.2" height="2.6" fill="#5a5a5a"/><rect x="1221.00" y="971" width="1.2" height="6.3" fill="#5a5a5a"/><rect x="1230.67" y="971" width="1.2" height="2.6" fill="#5a5a5a"/><rect x="1240.33" y="971" width="1.2" height="6.3" fill="#5a5a5a"/><rect x="1250.00" y="971" width="1.2" height="2.6" fill="#5a5a5a"/><rect x="1259.67" y="971" width="1.2" height="6.3" fill="#5a5a5a"/><rect x="1269.33" y="971" width="1.2" height="2.6" fill="#5a5a5a"/><rect x="1279.00" y="971" width="1.2" height="6.3" fill="#5a5a5a"/><rect x="1288.67" y="971" width="1.2" height="2.6" fill="#5a5a5a"/><rect x="1298.33" y="971" width="1.2" height="6.3" fill="#5a5a5a"/><rect x="1308.00" y="971" width="1.2" height="2.6" fill="#5a5a5a"/><rect x="1317.67" y="971" width="1.2" height="6.3" fill="#5a5a5a"/><rect x="1327.33" y="971" width="1.2" height="2.6" fill="#5a5a5a"/><rect x="1336.85" y="971" width="1.5" height="19" fill="#5a5a5a"/><rect x="1346.67" y="971" width="1.2" height="2.6" fill="#5a5a5a"/><rect x="1356.33" y="971" width="1.2" height="6.3" fill="#5a5a5a"/><rect x="1366.00" y="971" width="1.2" height="2.6" fill="#5a5a5a"/><rect x="1375.67" y="971" width="1.2" height="6.3" fill="#5a5a5a"/><rect x="1385.33" y="971" width="1.2" height="2.6" fill="#5a5a5a"/><rect x="1395.00" y="971" width="1.2" height="6.3" fill="#5a5a5a"/><rect x="1404.67" y="971" width="1.2" height="2.6" fill="#5a5a5a"/><rect x="1414.33" y="971" width="1.2" height="6.3" fill="#5a5a5a"/><rect x="1424.00" y="971" width="1.2" height="2.6" fill="#5a5a5a"/><rect x="1433.67" y="971" width="1.2" height="6.3" fill="#5a5a5a"/><rect x="1443.33" y="971" width="1.2" height="2.6" fill="#5a5a5a"/><rect x="1453.00" y="971" width="1.2" height="6.3" fill="#5a5a5a"/><rect x="1462.67" y="971" width="1.2" height="2.6" fill="#5a5a5a"/><rect x="1472.33" y="971" width="1.2" height="6.3" fill="#5a5a5a"/><rect x="1482.00" y="971" width="1.2" height="2.6" fill="#5a5a5a"/><rect x="1491.67" y="971" width="1.2" height="6.3" fill="#5a5a5a"/><rect x="1501.33" y="971" width="1.2" height="2.6" fill="#5a5a5a"/><rect x="1511.00" y="971" width="1.2" height="6.3" fill="#5a5a5a"/><rect x="1520.67" y="971" width="1.2" height="2.6" fill="#5a5a5a"/><rect x="1530.33" y="971" width="1.2" height="6.3" fill="#5a5a5a"/><rect x="1540.00" y="971" width="1.2" height="2.6" fill="#5a5a5a"/><rect x="1549.67" y="971" width="1.2" height="6.3" fill="#5a5a5a"/><rect x="1559.33" y="971" width="1.2" height="2.6" fill="#5a5a5a"/><rect x="1569.00" y="971" width="1.2" height="6.3" fill="#5a5a5a"/><rect x="1578.67" y="971" width="1.2" height="2.6" fill="#5a5a5a"/><rect x="1588.33" y="971" width="1.2" height="6.3" fill="#5a5a5a"/><rect x="1598.00" y="971" width="1.2" height="2.6" fill="#5a5a5a"/><rect x="1607.67" y="971" width="1.2" height="6.3" fill="#5a5a5a"/><rect x="1617.33" y="971" width="1.2" height="2.6" fill="#5a5a5a"/><rect x="1626.85" y="971" width="1.5" height="19" fill="#5a5a5a"/><rect x="1636.67" y="971" width="1.2" height="2.6" fill="#5a5a5a"/><rect x="1646.33" y="971" width="1.2" height="6.3" fill="#5a5a5a"/><rect x="1656.00" y="971" width="1.2" height="2.6" fill="#5a5a5a"/><rect x="1665.67" y="971" width="1.2" height="6.3" fill="#5a5a5a"/><rect x="1675.33" y="971" width="1.2" height="2.6" fill="#5a5a5a"/><rect x="1685.00" y="971" width="1.2" height="6.3" fill="#5a5a5a"/><rect x="1694.67" y="971" width="1.2" height="2.6" fill="#5a5a5a"/><rect x="1704.33" y="971" width="1.2" height="6.3" fill="#5a5a5a"/><rect x="1714.00" y="971" width="1.2" height="2.6" fill="#5a5a5a"/><rect x="1723.67" y="971" width="1.2" height="6.3" fill="#5a5a5a"/><rect x="1733.33" y="971" width="1.2" height="2.6" fill="#5a5a5a"/><rect x="1743.00" y="971" width="1.2" height="6.3" fill="#5a5a5a"/><rect x="1752.67" y="971" width="1.2" height="2.6" fill="#5a5a5a"/><rect x="1762.33" y="971" width="1.2" height="6.3" fill="#5a5a5a"/><rect x="1772.00" y="971" width="1.2" height="2.6" fill="#5a5a5a"/><rect x="1781.67" y="971" width="1.2" height="6.3" fill="#5a5a5a"/><rect x="1791.33" y="971" width="1.2" height="2.6" fill="#5a5a5a"/><rect x="1801.00" y="971" width="1.2" height="6.3" fill="#5a5a5a"/><rect x="1810.67" y="971" width="1.2" height="2.6" fill="#5a5a5a"/><rect x="1820.33" y="971" width="1.2" height="6.3" fill="#5a5a5a"/><rect x="1830.00" y="971" width="1.2" height="2.6" fill="#5a5a5a"/><rect x="1839.67" y="971" width="1.2" height="6.3" fill="#5a5a5a"/><rect x="1849.33" y="971" width="1.2" height="2.6" fill="#5a5a5a"/><rect x="1859.00" y="971" width="1.2" height="6.3" fill="#5a5a5a"/><rect x="1868.67" y="971" width="1.2" height="2.6" fill="#5a5a5a"/><rect x="1878.33" y="971" width="1.2" height="6.3" fill="#5a5a5a"/><rect x="1888.00" y="971" width="1.2" height="2.6" fill="#5a5a5a"/><rect x="1897.67" y="971" width="1.2" height="6.3" fill="#5a5a5a"/><rect x="1907.33" y="971" width="1.2" height="2.6" fill="#5a5a5a"/></svg>
<div class="t" style="left:767.00px;top:984.03px;font-size:15.5px;color:#c8c8c8;font-weight:normal;font-family:'Liberation Sans';">00:01.00</div>
<div class="t" style="left:1057.00px;top:984.03px;font-size:15.5px;color:#c8c8c8;font-weight:normal;font-family:'Liberation Sans';">00:02.00</div>
<div class="t" style="left:1347.00px;top:984.03px;font-size:15.5px;color:#c8c8c8;font-weight:normal;font-family:'Liberation Sans';">00:03.00</div>
<div class="t" style="left:1637.00px;top:984.03px;font-size:15.5px;color:#c8c8c8;font-weight:normal;font-family:'Liberation Sans';">00:04.00</div>
<div class="a" style="left:467px;top:1011.2px;width:1438.4px;height:51px;background:#0b84f3;border-radius:5px"></div>
<div class="a" style="left:940.3px;top:975px;width:1.9px;height:137px;background:#ea3a1c;"></div>
<svg class="a" style="left:929.5px;top:971px" width="24" height="21" viewBox="0 0 24 21"><path d="M1 0 H23 V9.6 Q23 10.6 22.2 11.4 L12.6 19.6 Q12 20.1 11.4 19.6 L1.8 11.4 Q1 10.6 1 9.6 Z" fill="#f02c00"/></svg>
</div></body></html>
